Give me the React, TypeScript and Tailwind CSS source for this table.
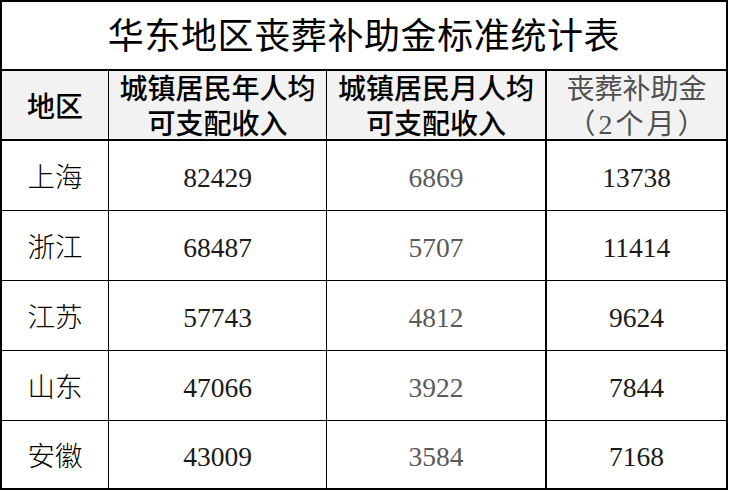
import React from "react";

const rows = [
  ["上海", "82429", "6869", "13738"],
  ["浙江", "68487", "5707", "11414"],
  ["江苏", "57743", "4812", "9624"],
  ["山东", "47066", "3922", "7844"],
  ["安徽", "43009", "3584", "7168"],
];

export default function App() {
  return (
    <div className="w-[729px] h-[491px] bg-white font-['Liberation_Serif','Noto_Sans_CJK_SC',serif] text-black">
      <div className="w-[728px] border-2 border-black">
        <div className="h-[69px] border-b-2 border-black flex items-center justify-center pt-[2px]">
          <span className="text-[36px] font-normal tracking-[0.6px] leading-none">华东地区丧葬补助金标准统计表</span>
        </div>
        <div className="h-[70px] border-b-2 border-black flex bg-[#f2f2f2] font-medium text-[28px] leading-[35px]">
          <div className="w-[107px] border-r border-black flex items-center justify-center pt-1">地区</div>
          <div className="w-[218px] border-r border-black flex flex-col items-center justify-center pt-1">
            <span>城镇居民年人均</span>
            <span>可支配收入</span>
          </div>
          <div className="w-[220px] border-r-2 border-black flex flex-col items-center justify-center pt-1">
            <span>城镇居民月人均</span>
            <span>可支配收入</span>
          </div>
          <div className="flex-1 flex flex-col items-center justify-center pt-1 text-[#505050] font-normal">
            <span>丧葬补助金</span>
            <span className="tracking-[3px] -mr-[3px]">（2个月）</span>
          </div>
        </div>
        {rows.map((r, i) => (
          <div
            key={r[0]}
            className={
              i < rows.length - 1
                ? "h-[70px] border-b border-black flex text-[27.5px]"
                : "h-[67px] flex text-[27.5px]"
            }
          >
            <div className="w-[107px] border-r border-black flex items-center justify-center pt-1 font-light">{r[0]}</div>
            <div className="w-[218px] border-r border-black flex items-center justify-center pt-1 text-[#1a1a1a]">{r[1]}</div>
            <div className="w-[220px] border-r-2 border-black flex items-center justify-center pt-1 text-[#5a5a5a]">{r[2]}</div>
            <div className="flex-1 flex items-center justify-center pt-1 text-[#1a1a1a]">{r[3]}</div>
          </div>
        ))}
      </div>
    </div>
  );
}
